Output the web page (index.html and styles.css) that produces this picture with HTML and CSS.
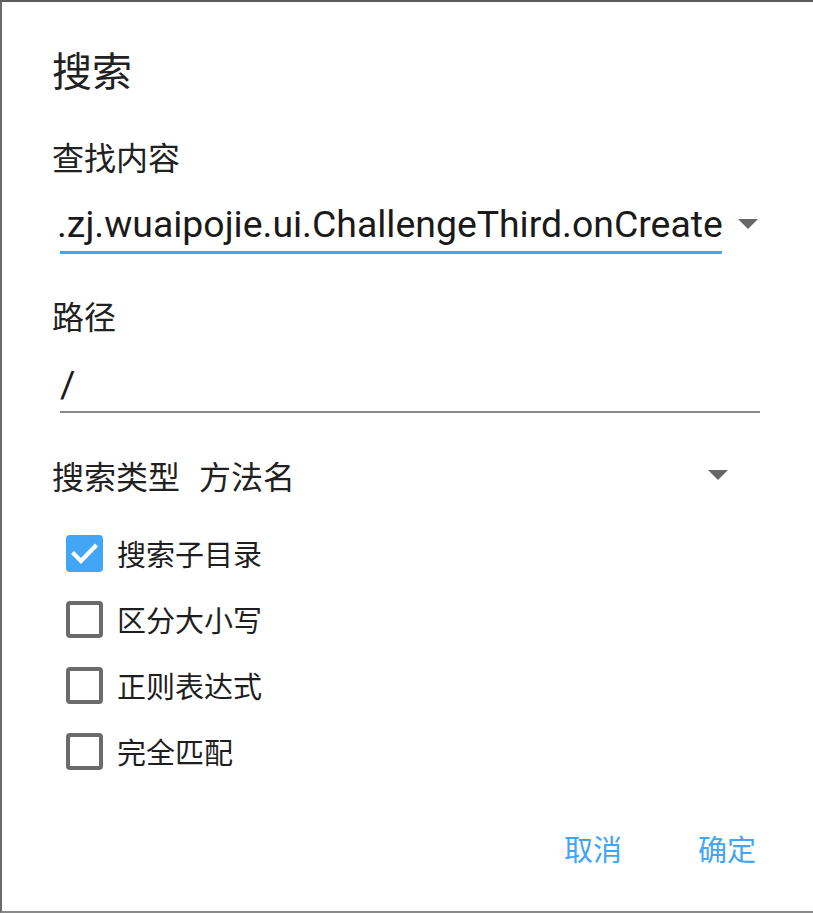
FILE: index.html
```html
<!DOCTYPE html>
<html lang="zh">
<head>
<meta charset="utf-8">
<title>搜索</title>
<link rel="stylesheet" href="styles.css">
</head>
<body>
<div class="dialog">
  <div class="title">搜索</div>
  <div class="label first">查找内容</div>
  <div class="combo">
    <div class="field active"><span class="value shifted">.zj.wuaipojie.ui.ChallengeThird.onCreate</span></div>
    <span class="arrow"></span>
  </div>
  <div class="label second">路径</div>
  <div class="field path"><span class="value">/</span></div>
  <div class="type-row">
    <span class="type-label">搜索类型</span>
    <span class="type-value">方法名</span>
    <span class="arrow type-arrow"></span>
  </div>
  <div class="checks">
    <div class="check-row">
      <span class="box checked"><svg width="37" height="37" viewBox="0 0 37 37"><polyline points="8,19 15,26 29,11.5" fill="none" stroke="#fff" stroke-width="4.2" stroke-linecap="square"/></svg></span>
      <span class="check-text">搜索子目录</span>
    </div>
    <div class="check-row">
      <span class="box"></span>
      <span class="check-text">区分大小写</span>
    </div>
    <div class="check-row">
      <span class="box"></span>
      <span class="check-text">正则表达式</span>
    </div>
    <div class="check-row">
      <span class="box"></span>
      <span class="check-text">完全匹配</span>
    </div>
  </div>
  <div class="actions">
    <span class="btn">取消</span>
    <span class="btn">确定</span>
  </div>
</div>
</body>
</html>
```
FILE: styles.css
```css
html, body {
  margin: 0;
  padding: 0;
  background: #ffffff;
}
body {
  font-family: "Noto Sans CJK SC", "Noto Sans", Roboto, sans-serif;
  color: #212121;
}
.dialog {
  box-sizing: border-box;
  width: 813px;
  height: 913px;
  border-top: 2px solid #5c5c5c;
  border-left: 2px solid #6a6a6a;
  border-bottom: 2px solid #8a8a8a;
  padding: 43px 53px 0 50px;
  display: flex;
  flex-direction: column;
}
.title {
  font-size: 40px;
  line-height: 48px;
  height: 48px;
}
.label {
  font-size: 32px;
  line-height: 40px;
  height: 40px;
}
.label.first { margin-top: 43px; }
.label.second { margin-top: 41px; }
.combo {
  margin-top: 22px;
  display: flex;
  align-items: center;
  padding-left: 8px;
}
.field {
  box-sizing: border-box;
  height: 56px;
  border-bottom: 2px solid #8a8a8a;
  display: flex;
  align-items: center;
  white-space: nowrap;
}
.field.active {
  width: 662px;
  border-bottom: 3px solid #42a5f5;
  height: 57px;
  margin-top: -1px;
}
.field.path {
  margin-top: 22px;
  margin-left: 8px;
}
.value {
  font-family: Roboto, "Liberation Sans", sans-serif;
  font-size: 37.4px;
  line-height: 44px;
  color: #1a1a1a;
}
.value.shifted {
  margin-left: -3px;
}
.arrow {
  width: 0;
  height: 0;
  border-left: 10px solid transparent;
  border-right: 10px solid transparent;
  border-top: 10px solid #666666;
  margin-left: 16px;
  margin-top: -4px;
}
.type-row {
  margin-top: 42px;
  height: 40px;
  display: flex;
  align-items: center;
  font-size: 32px;
  line-height: 40px;
}
.type-value { margin-left: 19px; }
.type-arrow {
  margin-left: auto;
  margin-right: 32px;
  margin-top: 0;
}
.checks {
  margin-top: 25px;
  display: flex;
  flex-direction: column;
}
.check-row {
  height: 66px;
  display: flex;
  align-items: center;
  padding-left: 14px;
}
.box {
  box-sizing: border-box;
  width: 37px;
  height: 37px;
  border: 4px solid #6b6b6b;
  border-radius: 4px;
  display: flex;
  align-items: center;
  justify-content: center;
}
.box.checked {
  border: none;
  background: #42a5f5;
}
.check-text {
  margin-left: 14px;
  font-size: 29px;
  line-height: 40px;
  color: #1e1e1e;
}
.actions {
  margin-top: 40px;
  height: 48px;
  display: flex;
  justify-content: flex-end;
  align-items: center;
  gap: 76px;
  padding-right: 4px;
}
.btn {
  font-size: 29px;
  line-height: 40px;
  color: #42a5f5;
}
```
